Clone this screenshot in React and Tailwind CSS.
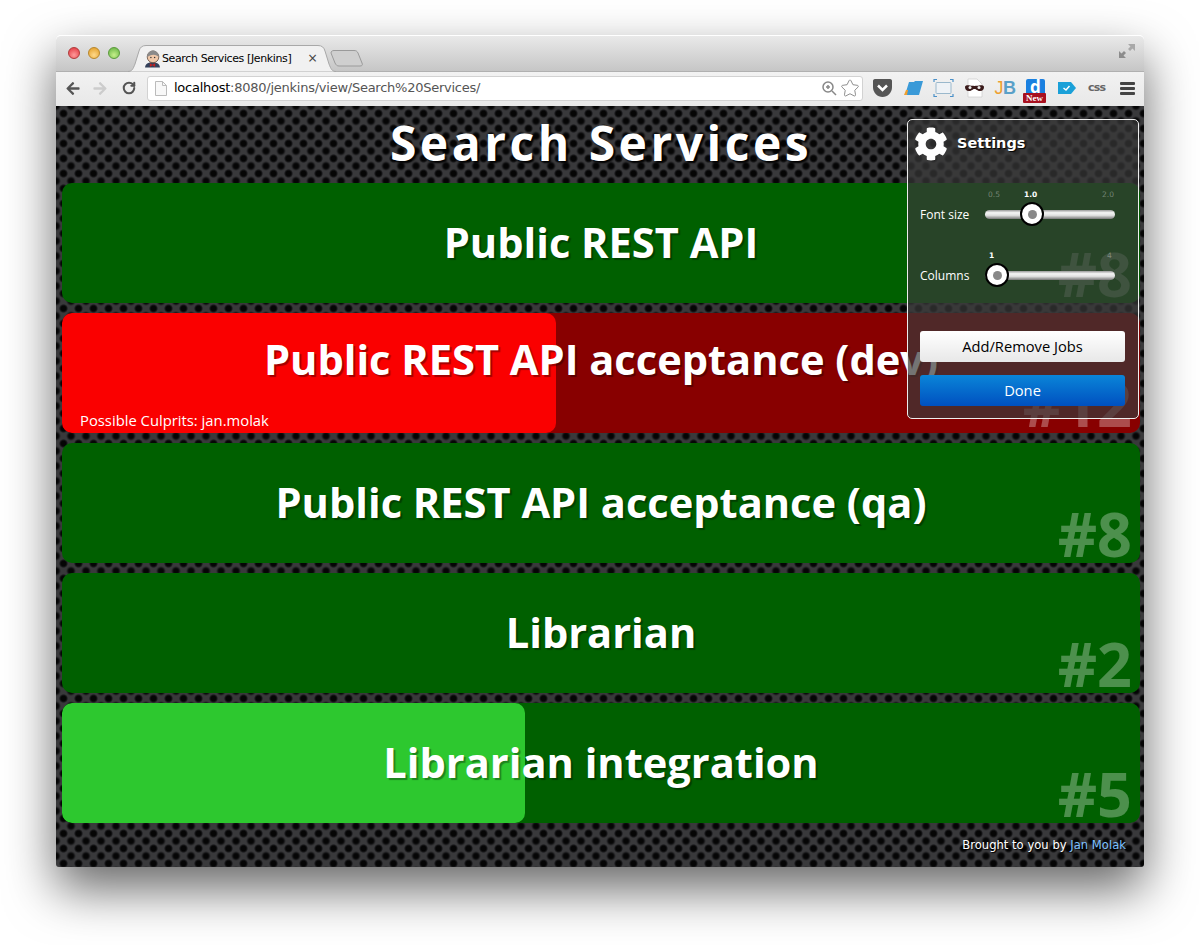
import { FaArrowLeft, FaArrowRight, FaCog, FaStar } from "react-icons/fa";
import { LuRotateCw } from "react-icons/lu";

const sans = "font-['Open_Sans',sans-serif]";

function Tile({ name, build, bar, barWidth, culprits, bg }) {
  return (
    <div className={`relative h-[120px] rounded-[10px] overflow-hidden ${bg} flex items-center justify-center`}>
      {bar && <div className={`absolute left-0 top-0 bottom-0 rounded-[10px] ${bar} ${barWidth}`} />}
      <div className={`relative text-white font-bold text-[41.6px] leading-none [text-shadow:2px_2px_1px_rgba(0,0,0,0.35)] ${culprits ? "mb-[26px]" : ""}`}>
        {name}
      </div>
      {culprits && (
        <div className="absolute left-[18px] bottom-[3px] text-white text-[14.8px] leading-[20px]">
          Possible Culprits: {culprits}
        </div>
      )}
      <div className="absolute right-[8px] bottom-[-11px] text-white/30 font-bold text-[61px] leading-[80px]">
        {build}
      </div>
    </div>
  );
}

function Slider({ label, marks, pos }) {
  return (
    <div className="relative h-[61px] flex items-center text-white text-[12px]">
      <div className="w-[66px] pl-[12px] box-content">{label}</div>
      <div className="relative ml-[-1px] w-[130px] h-[9px] rounded-full bg-[linear-gradient(#999,#f5f5f5_30%,#e0e0e0_60%,#777)]">
        <div className={`absolute top-[-8px] ${pos} w-[24px] h-[24px] rounded-full bg-white border-2 border-black flex items-center justify-center`}>
          <div className="w-[9px] h-[9px] rounded-full bg-[#888]" />
        </div>
        {marks.map((m) => (
          <div key={m.t} className={`absolute top-[-20px] ${m.x} font-['DejaVu_Sans',sans-serif] text-[7.5px] leading-[10px] ${m.on ? "text-white font-bold" : "text-white/35"}`}>
            {m.t}
          </div>
        ))}
      </div>
    </div>
  );
}

function Settings() {
  return (
    <div className="absolute left-[851px] top-[13px] w-[232px] h-[300px] rounded-[5px] border border-[#eee] bg-[#393939]/70 text-white">
      <div className="h-[46px] flex items-center pl-[6px] pt-[1px]">
        <FaCog className="w-[34px] h-[36px]" />
        <span className="ml-[9px] font-['DejaVu_Sans',sans-serif] font-bold text-[14.5px] [text-shadow:1px_1px_1px_#000]">Settings</span>
      </div>
      <div className="mt-[18px]">
        <Slider
          label="Font size"
          pos="left-[35px]"
          marks={[
            { t: "0.5", x: "left-[3px]" },
            { t: "1.0", x: "left-[39px]", on: true },
            { t: "2.0", x: "left-[117px]" },
          ]}
        />
        <Slider
          label="Columns"
          pos="left-0"
          marks={[
            { t: "1", x: "left-[4px]", on: true },
            { t: "4", x: "left-[122px]" },
          ]}
        />
      </div>
      <div className="mt-[25px] ml-[12px] mr-[13px] flex flex-col gap-[13px]">
        <div className="h-[31px] rounded-[3px] bg-[linear-gradient(#fff,#e8e8e8)] text-black text-[14.7px] flex items-center justify-center">
          Add/Remove Jobs
        </div>
        <div className="h-[31px] rounded-[3px] bg-[linear-gradient(#0a85d8,#0050c0)] text-white text-[14.7px] flex items-center justify-center">
          Done
        </div>
      </div>
    </div>
  );
}

function TitleBar() {
  return (
    <div className="relative h-[36px] rounded-t-[5px] border-t border-white bg-[linear-gradient(#e9e9e9,#c6c6c6)] flex pl-[12px]">
      <div className="flex gap-[8px] pt-[11px]">
        <div className="w-[12px] h-[12px] rounded-full border border-[#b03a3a] bg-[radial-gradient(circle_at_50%_70%,#ff9a9a,#e0303a)]" />
        <div className="w-[12px] h-[12px] rounded-full border border-[#b8862a] bg-[radial-gradient(circle_at_50%_70%,#ffd98a,#e09a20)]" />
        <div className="w-[12px] h-[12px] rounded-full border border-[#5a9a3a] bg-[radial-gradient(circle_at_50%_70%,#c6f08a,#60b040)]" />
      </div>
      {/* tab shape */}
      <svg className="absolute left-[72px] top-[9px]" width="240" height="27" viewBox="0 0 240 27">
        <path d="M0 26.500C4 26.500 5 24 7 19L11 6C12 2.500 14 .5 18 .5H190C194 .5 196 2.500 197 6L201 19C203 24 204 26.500 208 26.500" fill="#f1f1f1" stroke="#a8a8a8" />
        <path d="M203 8C203 6.500 204 5.500 206 5.500H226C228 5.500 229 6 230 8L234 18C235 20 234 21 232 21H211C209 21 208 20 207 18Z" fill="#cfcfcf" stroke="#9a9a9a" />
      </svg>
      <div className="absolute left-[88px] top-[14px]">
        <svg width="17" height="18" viewBox="0 0 16 17">
          <path d="M1 16.500C1 13 4 11.500 8 11.500S15 13 15 16.500Z" fill="#33405a" />
          <circle cx="8.500" cy="6.500" r="5.500" fill="#f0c8a8" stroke="#5a4030" strokeWidth=".7" />
          <path d="M3 7C2.500 2.500 6 .5 8.500 .5S14 2.500 14 7C12 3.500 6 3.500 3 7Z" fill="#8a8a8a" />
          <path d="M5.500 12.500L8 14L10.500 12.500V16L8 14.500L5.500 16Z" fill="#c02020" />
          <circle cx="6.500" cy="7" r=".7" fill="#333" />
          <circle cx="10" cy="7" r=".7" fill="#333" />
        </svg>
      </div>
      <div className="absolute left-[106px] top-[15px] pt-px font-['DejaVu_Sans',sans-serif] text-[11px] leading-[14px] tracking-[-0.38px] text-black">
        Search Services [Jenkins]
      </div>
      <div className="absolute left-[252px] top-[13px] text-[16px] leading-[18px] text-[#444]">×</div>
      <svg className="absolute right-[8px] top-[7px]" width="18" height="16" viewBox="0 0 18 16">
        <path d="M10 1H17V8L14.500 5.500L12 8L10 6L12.500 3.500Z" fill="#a8a8a8" />
        <path d="M1 8L3.500 10.500L6 8L8 10L5.500 12.500L8 15H1Z" fill="#8c8c8c" />
      </svg>
    </div>
  );
}

function ExtIcons() {
  return (
    <div className="flex items-center ml-[7px] gap-[5.6px]">
      <svg width="25" height="24" viewBox="0 0 25 24">
        <path d="M5 3H20C21.500 3 22 4 22 5V11C22 17 17.500 21 12.500 21S3 17 3 11V5C3 4 3.500 3 5 3Z" fill="#555" />
        <path d="M8 9.500L12.500 14L17 9.500" stroke="#fff" strokeWidth="2.500" fill="none" />
      </svg>
      <svg width="25" height="24" viewBox="0 0 25 24">
        <path d="M4 19L8 6H13L14 5H22L18 19Z" fill="#3a9ad8" />
        <path d="M3 19L5 14H7L6 19Z" fill="#f0a030" />
      </svg>
      <svg width="25" height="24" viewBox="0 0 25 24" fill="none">
        <rect x="5" y="6.500" width="15" height="11" rx="1" fill="#eef2f6" stroke="#9ab8cc" />
        <path d="M3 6V3.500H6M19 3.500H22V6M22 18V20.500H19M6 20.500H3V18" stroke="#4a90c8" strokeWidth="1.200" />
      </svg>
      <svg width="25" height="24" viewBox="0 0 25 24">
        <path d="M6 3H15L20 8V21H6Z" fill="#fff" stroke="#ccc" strokeWidth=".7" />
        <path d="M3 11C3 9.500 5 9 8 9.500C10 10 15 10 17 9.500C20 9 22 9.500 22 11C22 13 21 15 18 15C15 15 14.500 13 12.500 13S10 15 7 15C4 15 3 13 3 11Z" fill="#3a1a1a" />
        <circle cx="8" cy="11.500" r="1.500" fill="#eee" />
        <circle cx="17" cy="11.500" r="1.500" fill="#eee" />
      </svg>
      <div className="w-[25px] text-center text-[18px] leading-[24px] font-['Liberation_Sans',sans-serif] tracking-[-0.5px]">
        <span className="text-[#eea030]">J</span><span className="font-bold text-[#5aa0c8]">B</span>
      </div>
      <div className="relative w-[25px] h-[24px]">
        <div className="absolute left-[3px] top-[3px] w-[19px] h-[15px] overflow-hidden bg-[#1a80e0] rounded-t-[2px] text-white font-bold text-[17px] leading-[15px] text-center">d</div>
        <div className="absolute left-[0px] top-[17px] w-[23px] h-[10px] bg-[#a81020] rounded-[1px] text-white font-bold font-['Liberation_Serif',serif] text-[9px] leading-[10px] text-center">New</div>
      </div>
      <svg width="25" height="24" viewBox="0 0 25 24">
        <path d="M4 6H17L22 12L17 18H4Z" fill="#1aa0d8" />
        <path d="M9.500 12L12 14L15.500 10" stroke="#fff" strokeWidth="1.500" fill="none" />
      </svg>
      <div className="w-[25px] text-center text-[11px] leading-[24px] font-bold font-['DejaVu_Sans',sans-serif] tracking-[-0.7px] text-[#666]">css</div>
      <div className="w-[25px] flex flex-col items-center gap-[2px]">
        <div className="w-[15px] h-[3px] rounded-[1px] bg-[#444]" />
        <div className="w-[15px] h-[3px] rounded-[1px] bg-[#444]" />
        <div className="w-[15px] h-[3px] rounded-[1px] bg-[#444]" />
      </div>
    </div>
  );
}

function Toolbar() {
  return (
    <div className="h-[35px] pb-[2px] bg-[linear-gradient(#f2f2f2,#e8e8e8)] border-t border-[#b0b0b0] flex items-center pl-[9px]">
      <FaArrowLeft className="w-[16px] h-[15px] text-[#555]" />
      <FaArrowRight className="w-[16px] h-[15px] ml-[11px] text-[#ccc]" />
      <LuRotateCw className="w-[14px] h-[14px] ml-[14px] text-[#555] stroke-[3.5]" />
      <div className="ml-[11px] w-[716px] h-[25px] rounded-[3px] bg-white border border-[#d2d2d2] flex items-center pl-[7px] pr-[3px]">
        <svg width="12" height="15" viewBox="0 0 12 15" fill="#f8f8f8" stroke="#bbb">
          <path d="M.5.500H7.500L11.500 4.500V14.500H.500Z" />
          <path d="M7.500.500V4.500H11.500" fill="none" />
        </svg>
        <div className="ml-[7px] font-['DejaVu_Sans',sans-serif] text-[13px] tracking-[-0.25px] text-[#555] grow">
          <span className="text-black">localhost</span>:8080/jenkins/view/Search%20Services/
        </div>
        <svg width="16" height="16" viewBox="0 0 16 16" fill="none" stroke="#888" strokeWidth="1.500">
          <circle cx="7" cy="7" r="5" />
          <path d="M11 11L15 15M5 7H9M7 5V9" />
        </svg>
        <FaStar className="ml-[4px] w-[18px] h-[18px] text-white stroke-[#888] stroke-[30]" />
      </div>
      <ExtIcons />
    </div>
  );
}

export default function App() {
  return (
    <div className={`h-[945px] overflow-hidden bg-white pl-[56px] pt-[35px] ${sans}`}>
      <div className="w-[1088px] h-[832px] rounded-[5px] shadow-[0_22px_50px_rgba(0,0,0,0.6)] flex flex-col">
        <TitleBar />
        <Toolbar />
        <div className="relative h-[761px] rounded-b-[3px] bg-[#39393b] bg-[radial-gradient(circle,#050505_2.4px,#161618_3.4px,transparent_4.6px),radial-gradient(circle,#050505_2.4px,#161618_3.4px,transparent_4.6px)] bg-[size:15px_15px] bg-[position:0_0,7.5px_7.5px] pl-[6px] pr-[4px] pt-[6px]">
          <h1 className="h-[61px] mb-[10px] flex items-center justify-center text-white font-bold text-[48px] tracking-[3.5px] [text-shadow:2px_2px_2px_#000]">
            Search Services
          </h1>
          <div className="flex flex-col gap-[10px]">
            <Tile name="Public REST API" build="#8" bg="bg-[#006000]" />
            <Tile name="Public REST API acceptance (dev)" build="#12" bg="bg-[#880000]" bar="bg-[#fa0000]" barWidth="w-[494px]" culprits="jan.molak" />
            <Tile name="Public REST API acceptance (qa)" build="#8" bg="bg-[#006000]" />
            <Tile name="Librarian" build="#2" bg="bg-[#006000]" />
            <Tile name="Librarian integration" build="#5" bg="bg-[#006000]" bar="bg-[#2dc82f]" barWidth="w-[463px]" />
          </div>
          <div className="pt-[13px] pr-[14px] text-right font-['DejaVu_Sans',sans-serif] text-[11.6px] leading-[18px] text-white [text-shadow:1px_1px_1px_#000]">
            Brought to you by <span className="text-[#7cc0ff]">Jan Molak</span>
          </div>
          <Settings />
        </div>
      </div>
    </div>
  );
}
